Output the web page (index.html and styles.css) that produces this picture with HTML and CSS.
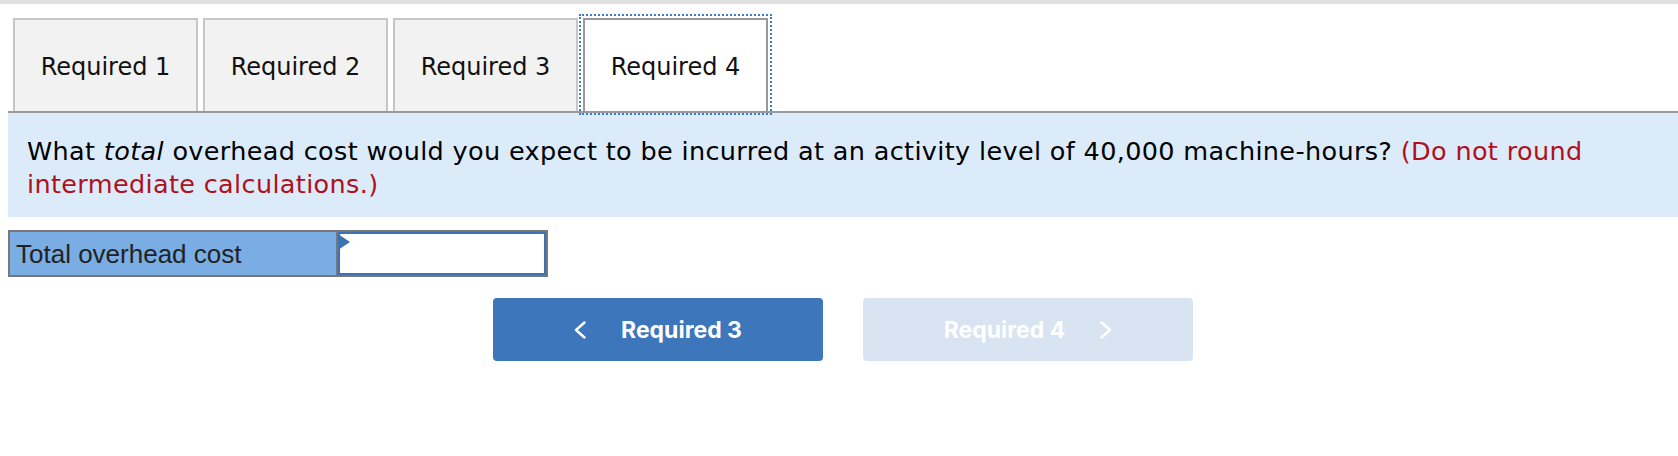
FILE: index.html
```html
<!DOCTYPE html>
<html lang="en">
<head>
<meta charset="utf-8">
<title>Required 4</title>
<link rel="stylesheet" href="styles.css">
</head>
<body>
<div class="topbar"></div>
<div class="page">
  <div class="tabs">
    <div class="tab">Required 1</div>
    <div class="tab">Required 2</div>
    <div class="tab">Required 3</div>
    <div class="tab active">Required 4</div>
  </div>
  <div class="question">
    What <em>total</em> overhead cost would you expect to be incurred at an activity level of 40,000 machine-hours? <span class="note">(Do not round intermediate calculations.)</span>
  </div>
  <div class="answer-row">
    <div class="answer-label">Total overhead cost</div>
    <div class="answer-input"><span class="flag"></span></div>
  </div>
  <div class="nav">
    <button class="nav-btn prev">
      <svg class="chev" viewBox="0 0 12 18" width="12" height="18"><path d="M10.5 1.5 L2 9 L10.5 16.5" fill="none" stroke="#fff" stroke-width="2.4" stroke-linecap="round" stroke-linejoin="round"/></svg>
      <span>Required 3</span>
    </button>
    <button class="nav-btn next">
      <span>Required 4</span>
      <svg class="chev" viewBox="0 0 12 18" width="12" height="18"><path d="M1.5 1.5 L10 9 L1.5 16.5" fill="none" stroke="#fff" stroke-width="2.4" stroke-linecap="round" stroke-linejoin="round"/></svg>
    </button>
  </div>
</div>
</body>
</html>
```

FILE: styles.css
```css
html, body {
  margin: 0;
  padding: 0;
  background: #ffffff;
}

.topbar {
  height: 4px;
  background: #e0e0e0;
}

.page {
  margin-left: 8px;
}

.tabs {
  display: flex;
  gap: 5px;
  padding-left: 5px;
  margin-top: 14px;
  border-bottom: 2px solid #999999;
}

.tab {
  box-sizing: border-box;
  width: 185px;
  height: 93px;
  display: flex;
  align-items: center;
  justify-content: center;
  padding-top: 3px;
  background: #f2f2f2;
  border: 2px solid #c6c6c6;
  border-bottom: none;
  font-family: "DejaVu Sans", Verdana, sans-serif;
  font-size: 24px;
  color: #111111;
}

.tab.active {
  background: #ffffff;
  border-color: #999999;
  outline: 2px dotted #3d7bcc;
  outline-offset: 2px;
}

.question {
  background: #dcebf9;
  padding: 22px 20px 16px 19px;
  font-family: "DejaVu Sans", Verdana, sans-serif;
  font-size: 25.5px;
  letter-spacing: 0.35px;
  line-height: 33px;
  color: #000000;
}

.question em {
  font-style: italic;
}

.note {
  color: #b0101c;
}

.answer-row {
  display: flex;
  width: 540px;
  height: 47px;
  box-sizing: border-box;
  margin-top: 13px;
  border: 2px solid #777777;
}

.answer-label {
  box-sizing: border-box;
  width: 328px;
  background: #79ade3;
  border-right: 2px solid #777777;
  padding-left: 6px;
  display: flex;
  align-items: center;
  padding-top: 2px;
  font-family: "Liberation Sans", Arial, sans-serif;
  font-size: 26px;
  color: #222222;
}

.answer-input {
  position: relative;
  flex: 1;
  background: #ffffff;
  border: 2px solid #3a72b8;
}

.flag {
  position: absolute;
  left: -2px;
  top: 0;
  width: 0;
  height: 0;
  border-top: 8px solid transparent;
  border-bottom: 8px solid transparent;
  border-left: 12px solid #3a72b8;
}

.nav {
  display: flex;
  justify-content: center;
  gap: 40px;
  margin-top: 21px;
}

.nav-btn {
  box-sizing: border-box;
  width: 330px;
  height: 63px;
  border: none;
  border-radius: 4px;
  display: flex;
  align-items: center;
  justify-content: center;
  gap: 35px;
  font-family: Inter, "Noto Sans", sans-serif;
  font-weight: 700;
  font-size: 23px;
  color: #ffffff;
  padding: 0;
}

.nav-btn.prev {
  background: #3d76bb;
}

.nav-btn.next {
  background: #d8e4f1;
}

.chev {
  display: block;
}
```
